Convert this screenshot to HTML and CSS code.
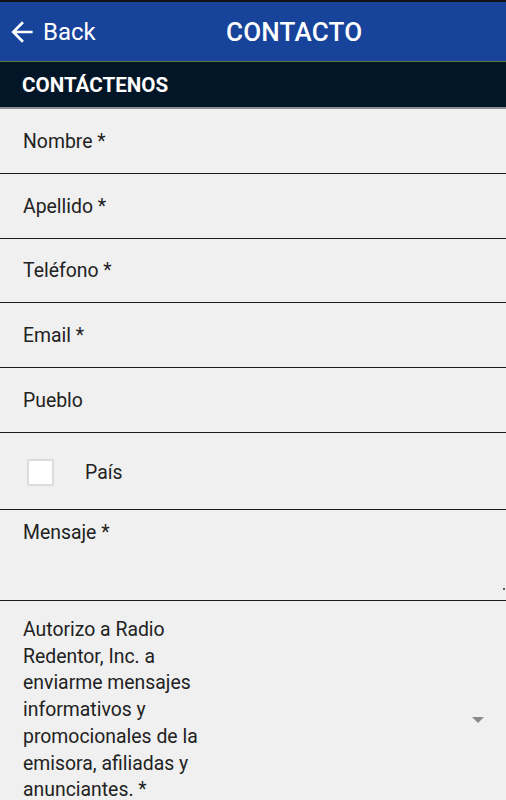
FILE: index.html
```html
<!DOCTYPE html>
<html>

<head>
  <meta charset="UTF-8">
  <meta name="viewport" content="width=device-width, initial-scale=1" />
  <title>Contacto</title>
  <link rel="stylesheet" href="styles.css">
</head>

<body>
  <header id="topbar">
    <a class="back" href="#">
      <svg viewBox="0 0 24 24" width="32" height="32">
        <path d="M20 11H7.83l5.59-5.59L12 4l-8 8 8 8 1.41-1.41L7.83 13H20v-2z" />
      </svg>
      <span>Back</span>
    </a>
    <h1>CONTACTO</h1>
  </header>

  <h2 id="section">CONTÁCTENOS</h2>

  <form id="contact">
    <div class="field">Nombre *</div>
    <div class="field">Apellido *</div>
    <div class="field short">Teléfono *</div>
    <div class="field">Email *</div>
    <div class="field">Pueblo</div>

    <label class="field check">
      <span class="box"></span>
      <span>País</span>
    </label>

    <div class="field message">
      <span>Mensaje *</span>
      <i class="grip"></i>
    </div>

    <div class="field consent">
      <p>Autorizo a Radio Redentor, Inc. a enviarme mensajes informativos y promocionales de la emisora, afiliadas y anunciantes. *</p>
      <i class="caret"></i>
    </div>
  </form>
</body>

</html>
```

FILE: styles.css
```css
:root {
  --color-text: #222;
  --color-bg: #F0F0F0;
  --color-blue: #17449A;
  --color-navy: #031627;
  --color-line: #1c1c1c;
}

* {
  margin: 0;
  padding: 0;
  box-sizing: border-box;
  font-family: Roboto, "Liberation Sans", sans-serif;
}

body {
  background-color: var(--color-bg);
  color: var(--color-text);
}

#topbar {
  height: 62px;
  border-top: 2px solid #111;
  border-bottom: 1px solid #5f7a37;
  background-color: var(--color-blue);

  display: flex;
  align-items: center;

  .back {
    flex-shrink: 0;
    padding-left: 6px;
    width: 226px;
    color: white;
    text-decoration: none;

    display: flex;
    align-items: center;
    gap: 5px;

    svg {
      fill: white;
      margin-top: 1px;
    }

    span {
      font-size: 24px;
    }
  }

  h1 {
    color: white;
    font-size: 26px;
    font-weight: 500;
    letter-spacing: 0.2px;
    margin-top: 1px;
  }
}

#section {
  height: 47px;
  padding-left: 22px;
  border-bottom: 2px solid #8a8d91;
  background-color: var(--color-navy);
  color: white;
  font-size: 20.6px;
  font-weight: 700;

  display: flex;
  align-items: center;
}

#contact {
  .field {
    height: 65px;
    padding-left: 23px;
    border-bottom: 1.5px solid var(--color-line);
    font-size: 19.4px;

    display: flex;
    align-items: center;
  }

  .short {
    height: 64px;
  }

  .check {
    height: 77px;
    padding-left: 27px;
    gap: 31px;
    padding-top: 2px;

    .box {
      width: 27px;
      height: 27px;
      border: 2px solid #dcdcdc;
      border-radius: 2px;
      background-color: white;
    }
  }

  .message {
    position: relative;
    height: 91px;
    align-items: flex-start;
    padding-top: 11px;

    .grip {
      position: absolute;
      right: 1px;
      bottom: 10px;
      width: 2px;
      height: 2px;
      background-color: #555;
    }
  }

  .consent {
    height: auto;
    padding-top: 16px;
    border-bottom: none;
    justify-content: space-between;
    padding-right: 22px;

    p {
      width: 212px;
      line-height: 26.7px;
    }

    .caret {
      width: 0;
      height: 0;
      border-left: 6.5px solid transparent;
      border-right: 6.5px solid transparent;
      border-top: 6px solid #8a8a8a;
      margin-top: 20px;
    }
  }
}
```
